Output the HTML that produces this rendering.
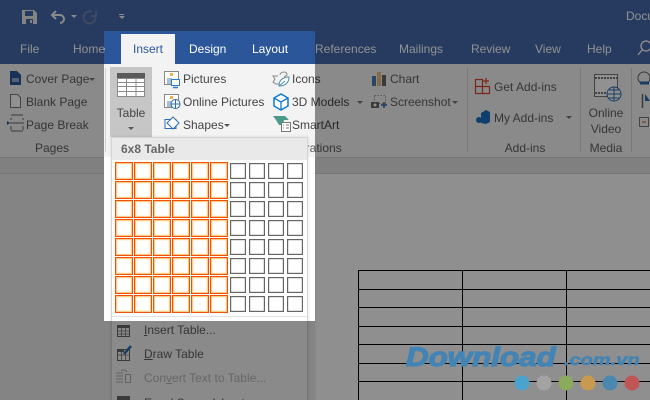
<!DOCTYPE html>
<html><head><meta charset="utf-8">
<style>
html,body{margin:0;padding:0;width:650px;height:400px;overflow:hidden;background:#fbfbfb}
body{position:relative;font-family:"Liberation Sans",sans-serif;font-size:12px;color:#444}
div{position:absolute}
.t{white-space:nowrap;line-height:14px;height:14px}
.w{color:#fff}
.c{text-align:center}
.d{color:#5e5e5e}
u{text-decoration:underline}
.dim{background:rgba(0,0,0,.43)}
svg{position:absolute;left:0;top:0}
</style></head><body>
<!-- base -->
<div style="left:0;top:0;width:650px;height:64px;background:#4368a8"></div>
<div style="left:0;top:64px;width:650px;height:93px;background:#f3f3f3"></div>
<div style="left:0;top:157px;width:650px;height:17px;background:#e2e2e2;border-top:1px solid #d0d0d0;border-bottom:1px solid #d0d0d0;box-sizing:border-box"></div>
<div style="left:0;top:174px;width:650px;height:226px;background:linear-gradient(90deg,#e8e8e8 0,#e8e8e8 315px,#fbfbfb 316px)"></div>
<div style="left:104px;top:31px;width:211px;height:33px;background:#2b579a"></div>
<div style="left:121px;top:34px;width:54px;height:30px;background:#f3f3f3"></div>
<div style="left:104px;top:157px;width:211px;height:164px;background:#fff"></div>
<div style="left:110px;top:67px;width:42px;height:70px;background:#c6c6c6"></div>
<!-- doc table -->
<div style="left:358px;top:270px;width:292px;height:1px;background:#000"></div>
<div style="left:358px;top:289px;width:292px;height:1px;background:#000"></div>
<div style="left:358px;top:307px;width:292px;height:1px;background:#000"></div>
<div style="left:358px;top:326px;width:292px;height:1px;background:#000"></div>
<div style="left:358px;top:344px;width:292px;height:1px;background:#000"></div>
<div style="left:358px;top:363px;width:292px;height:1px;background:#000"></div>
<div style="left:358px;top:381px;width:292px;height:1px;background:#000"></div>
<div style="left:358px;top:270px;width:1px;height:130px;background:#000"></div>
<div style="left:462px;top:270px;width:1px;height:130px;background:#000"></div>
<div style="left:566px;top:270px;width:1px;height:130px;background:#000"></div>
<!-- separators -->
<div style="left:105px;top:68px;width:1px;height:84px;background:#d2d2d2"></div>
<div style="left:467px;top:68px;width:1px;height:84px;background:#d2d2d2"></div>
<div style="left:580px;top:68px;width:1px;height:84px;background:#d2d2d2"></div>
<div style="left:631px;top:68px;width:1px;height:84px;background:#d2d2d2"></div>
<!-- tabs -->
<div class="t w" style="left:20px;top:42px">File</div>
<div class="t w" style="left:73px;top:42px">Home</div>
<div class="t" style="left:133px;top:42px;color:#2b579a">Insert</div>
<div class="t w" style="left:189px;top:42px">Design</div>
<div class="t w" style="left:252px;top:42px">Layout</div>
<div class="t w" style="left:315px;top:42px">References</div>
<div class="t w" style="left:399px;top:42px">Mailings</div>
<div class="t w" style="left:471px;top:42px">Review</div>
<div class="t w" style="left:535px;top:42px">View</div>
<div class="t w" style="left:587px;top:42px">Help</div>
<div class="t w" style="left:626px;top:9px">Document</div>
<!-- ribbon text -->
<div class="t d" style="left:26px;top:72px">Cover Page</div>
<div class="t d" style="left:26px;top:95px">Blank Page</div>
<div class="t d" style="left:26px;top:118px">Page Break</div>
<div class="t c d" style="left:22px;width:60px;top:141px">Pages</div>
<div class="t c" style="left:110px;width:42px;top:106px">Table</div>
<div class="t" style="left:183px;top:72px">Pictures</div>
<div class="t" style="left:183px;top:95px">Online Pictures</div>
<div class="t" style="left:183px;top:118px">Shapes</div>
<div class="t" style="left:292px;top:72px">Icons</div>
<div class="t" style="left:292px;top:95px">3D Models</div>
<div class="t" style="left:292px;top:118px">SmartArt</div>
<div class="t d" style="left:390px;top:72px">Chart</div>
<div class="t d" style="left:390px;top:95px">Screenshot</div>
<div class="t d" style="left:494px;top:80px">Get Add-ins</div>
<div class="t d" style="left:494px;top:111px">My Add-ins</div>
<div class="t c d" style="left:581px;width:50px;top:106px">Online</div>
<div class="t c d" style="left:581px;width:50px;top:122px">Video</div>
<div class="t c d" style="left:490px;width:70px;top:141px">Add-ins</div>
<div class="t c d" style="left:581px;width:50px;top:141px">Media</div>
<div class="t d" style="left:281px;top:141px">Illustrations</div>
<!-- icons -->
<svg width="650" height="400" viewBox="0 0 650 400" fill="none">
 <!-- QAT -->
 <path d="M22 10h12l3 3v11H22z" fill="#e8e8e8"/><rect x="25" y="11" width="8" height="5" fill="#4368a8"/><rect x="26" y="19" width="7" height="5" fill="#4368a8"/><rect x="30" y="20" width="2" height="3" fill="#e8e8e8"/>
 <path d="M56 11l-4 4 4 4M53 15h7a3.500 3.500 0 0 1 0 8" stroke="#f2f2f2" stroke-width="2"/>
 <path d="M71 15h6l-3 3z" fill="#f2f2f2"/>
 <path d="M96 11v5h-5M95 15a6 6 0 1 1-3-3" stroke="#6b82ab" stroke-width="2"/>
 <path d="M119 14.500h5" stroke="#f2f2f2"/><path d="M119 16h6l-3 3z" fill="#f2f2f2"/>
 <circle cx="646" cy="46" r="5" stroke="#fff" stroke-width="1.300"/><path d="M642 50l-4 5" stroke="#fff" stroke-width="1.300"/>
 <!-- pages -->
 <path d="M10 71h7l4 4v10H10z" fill="#2b579a"/><path d="M12 79h7M12 81h7" stroke="#fff"/>
 <path d="M10.500 94.500h7l3 3v10h-10z" stroke="#777" fill="#fff"/>
 <path d="M11 115h12M11 131h12M11 118v2M23 118v2M11 126v4M23 126v4M10 123h14" stroke="#666"/><path d="M7 121l3 2-3 2z" fill="#2b579a"/>
 <path d="M89 78h6l-3 3z" fill="#777"/>
 <!-- table -->
 <rect x="117" y="73" width="28" height="24" fill="#8a8a8a"/><rect x="117" y="73" width="28" height="5" fill="#5a5a5a"/>
 <g fill="#fff"><rect x="118" y="79" width="8" height="3"/><rect x="127" y="79" width="8.500" height="3"/><rect x="136.500" y="79" width="7.500" height="3"/><rect x="118" y="83" width="8" height="3"/><rect x="127" y="83" width="8.500" height="3"/><rect x="136.500" y="83" width="7.500" height="3"/><rect x="118" y="87" width="8" height="4"/><rect x="127" y="87" width="8.500" height="4"/><rect x="136.500" y="87" width="7.500" height="4"/><rect x="118" y="92" width="8" height="4"/><rect x="127" y="92" width="8.500" height="4"/><rect x="136.500" y="92" width="7.500" height="4"/></g>
 <path d="M128 127h6l-3 3z" fill="#555"/>
 <!-- pictures -->
 <rect x="164.500" y="71.500" width="14" height="13" stroke="#888" fill="#fff"/><rect x="167" y="78" width="5" height="6" fill="#a9bed6"/><rect x="170" y="73" width="3" height="3" fill="#f2b04a"/><rect x="171.500" y="79.500" width="8" height="6" stroke="#2b7cd3" fill="#fff"/><path d="M173 87.500h5" stroke="#2b7cd3" stroke-width="1.500"/>
 <rect x="164.500" y="94.500" width="14" height="13" stroke="#888" fill="#fff"/><rect x="167" y="101" width="5" height="6" fill="#a9bed6"/><rect x="170" y="96" width="3" height="3" fill="#f2b04a"/><circle cx="175.500" cy="104" r="4.500" fill="#fff" stroke="#2b6cb0"/><path d="M171 104h9M175.500 99.500v9" stroke="#2b6cb0"/>
 <path d="M165 119.500h11v9h-11z" stroke="#2b6cb0" fill="#fff"/><path d="M173 117l6 6-6 6-6-6z" stroke="#2b6cb0" fill="#fff"/><path d="M224 124h6l-3 3z" fill="#555"/>
 <!-- icons -->
 <path d="M280 75c0-2 2-3 4-3s3 1 3 3l-3 2 M278 76h-5l2 3-2 3 3 2h3" stroke="#888"/><path d="M279 86c0-6 4-9 10-9 0 6-4 9-10 9z" stroke="#4a8fa8" fill="#fff"/><path d="M279 86l6-5" stroke="#4a8fa8"/>
 <path d="M274 98l7-4 7 4v8l-7 4-7-4z" stroke="#0f78d4" stroke-width="1.500" fill="#fff"/><path d="M274 98l7 4 7-4M281 102v8" stroke="#0f78d4" stroke-width="1.300"/>
 <path d="M273 116h12l4 4h-5l-1 5h-4l-3-5z" fill="#4a9a8a"/><rect x="281.500" y="122.500" width="9" height="9" stroke="#777" fill="#fff"/><path d="M283 125h1M286 125h3M283 128h1M286 128h3" stroke="#777"/>
 <!-- chart -->
 <rect x="372" y="76" width="4" height="10" fill="#4a7ab5"/><rect x="377" y="72" width="4" height="14" fill="#e3bc80"/><rect x="382" y="75" width="4" height="11" fill="#666"/>
 <rect x="374.500" y="95.500" width="11" height="8" stroke="#999" stroke-dasharray="1.500 1.500"/><rect x="371" y="102" width="8" height="6" fill="#666"/><circle cx="375" cy="105" r="1.500" fill="#fff"/><path d="M384 102v6M381 105h6" stroke="#2b6cb0" stroke-width="1.500"/>
 <path d="M357 101h6l-3 3z" fill="#777"/>
 <path d="M452 101h6l-3 3z" fill="#777"/>
 <!-- addins -->
 <path d="M475.500 79.500h7v7h-7zM475.500 86.500h7v7h-7zM482.500 86.500h7v7h-7zM486 78v6M483 81h6" stroke="#d3472a" stroke-width="1.200"/>
 <path d="M481 113l5-3 4 2v10l-4 2-5-1z" fill="#1f6fc0"/><circle cx="479" cy="120" r="3" fill="#1f6fc0"/>
 <path d="M566 116h6l-3 3z" fill="#777"/>
 <!-- video -->
 <rect x="594.500" y="74.500" width="23" height="22" stroke="#777" fill="#fff"/><path d="M595 78h23M595 93h23" stroke="#777" stroke-dasharray="2 1" stroke-width="2"/>
 <circle cx="614" cy="94" r="7" fill="#fff" stroke="#2b6cb0"/><path d="M607 94h14M614 87v14M609 90h10M609 98h10" stroke="#2b6cb0"/>
 <!-- next group -->
 <circle cx="644" cy="78" r="6" stroke="#666"/><path d="M640 83h9" stroke="#2b6cb0" stroke-width="3"/><path d="M642.500 94v14" stroke="#666" stroke-width="1.500"/><path d="M645 94v7h5" fill="#2b6cb0"/><rect x="639.500" y="117.500" width="9" height="9" stroke="#777"/><path d="M642 122h4" stroke="#d3472a"/>
</svg>
<!-- dropdown -->
<div style="left:111px;top:137px;width:197px;height:280px;background:#fff;border:1px solid #d4d4d4;box-sizing:border-box;box-shadow:0 0 3px rgba(0,0,0,.12)"></div>
<div style="left:112px;top:138px;width:195px;height:22px;background:#e9e9e9"></div>
<div class="t" style="left:121px;top:142px;font-weight:bold;color:#666">6x8 Table</div>
<div style="left:112px;top:316px;width:195px;height:1px;background:#e1e1e1"></div>
<div style="left:111px;top:321px;width:197px;height:79px;background:#f2f2f2;border-left:1px solid #d0d0d0;border-right:1px solid #d0d0d0;box-sizing:border-box"></div>
<svg width="650" height="400" viewBox="0 0 650 400" fill="none" id="grid">
 <defs>
  <g id="o"><rect x=".6" y=".6" width="16.800" height="16.800" stroke="#f2500a" stroke-width="1.200" fill="#fff"/><rect x="1.700" y="1.700" width="14.600" height="14.600" stroke="#ffd27f"/></g>
  <rect id="g" x=".6" y=".6" width="14.800" height="14.800" stroke="#666" stroke-width="1.200" fill="#fff"/>
  <g id="row">
   <use href="#o" x="0"/><use href="#o" x="19"/><use href="#o" x="38"/><use href="#o" x="57"/><use href="#o" x="76"/><use href="#o" x="95"/>
   <use href="#g" x="115" y="1"/><use href="#g" x="134" y="1"/><use href="#g" x="153" y="1"/><use href="#g" x="172" y="1"/>
  </g>
 </defs>
 <use href="#row" x="115" y="162"/><use href="#row" x="115" y="181"/><use href="#row" x="115" y="200"/><use href="#row" x="115" y="219"/><use href="#row" x="115" y="238"/><use href="#row" x="115" y="257"/><use href="#row" x="115" y="276"/><use href="#row" x="115" y="295"/>
</svg>
<!-- menu items -->
<div class="t d" style="left:144px;top:323px"><u>I</u>nsert Table...</div>
<div class="t d" style="left:144px;top:347px"><u>D</u>raw Table</div>
<div class="t" style="left:144px;top:371px;color:#b4b4b4">Con<u>v</u>ert Text to Table...</div>
<div class="t d" style="left:144px;top:396px">Excel Spreadsheet</div>
<svg width="650" height="400" viewBox="0 0 650 400" fill="none">
 <rect x="117.500" y="325.500" width="12" height="11" stroke="#666" fill="#f2f2f2"/><rect x="117" y="325" width="13" height="3" fill="#666"/><path d="M118 331h11M118 334h11M121.500 328v8M125.500 328v8" stroke="#888"/>
 <rect x="117.500" y="349.500" width="12" height="11" stroke="#666" fill="#f2f2f2"/><rect x="117" y="349" width="7" height="3" fill="#666"/><path d="M118 355h11M121.500 352v8M125.500 355v5" stroke="#888"/><path d="M124 354l7-8" stroke="#2b6cb0" stroke-width="2.500"/>
 <path d="M116 373h7M116 376h7M116 379h7M116 382h7M121 371a4 4 0 0 1 6 1" stroke="#aaa"/><rect x="125.500" y="374.500" width="5" height="8" stroke="#aaa"/>
 <rect x="117" y="396" width="13" height="4" fill="#666"/>
</svg>
<!-- dim overlay -->
<div class="dim" style="left:0;top:0;width:650px;height:31px"></div>
<div class="dim" style="left:0;top:31px;width:104px;height:290px"></div>
<div class="dim" style="left:315px;top:31px;width:335px;height:290px"></div>
<div class="dim" style="left:0;top:321px;width:650px;height:79px"></div>
<!-- watermark -->
<div class="t" style="left:406px;top:342px;height:30px;line-height:30px;font-size:27px;font-weight:bold;font-style:italic;color:#4384b4;-webkit-text-stroke:1.200px #4384b4;transform-origin:0 50%;transform:scaleX(1.160)">Download</div>
<div class="t" style="left:564px;top:352px;height:18px;line-height:18px;font-size:16px;font-weight:bold;font-style:italic;color:#4384b4;-webkit-text-stroke:.6px #4384b4;transform-origin:0 50%;transform:scaleX(1.250)">.com.vn</div>
<svg width="650" height="400" viewBox="0 0 650 400">
 <circle cx="522" cy="383" r="7.500" fill="#4aa3cc"/><circle cx="544" cy="383" r="7.500" fill="#a3a3a3"/><circle cx="566" cy="383" r="7.500" fill="#8aaa5c"/><circle cx="588" cy="383" r="7.500" fill="#c89a50"/><circle cx="610" cy="383" r="7.500" fill="#4a88b0"/><circle cx="632" cy="383" r="7.500" fill="#c05555"/>
</svg>
</body></html>
